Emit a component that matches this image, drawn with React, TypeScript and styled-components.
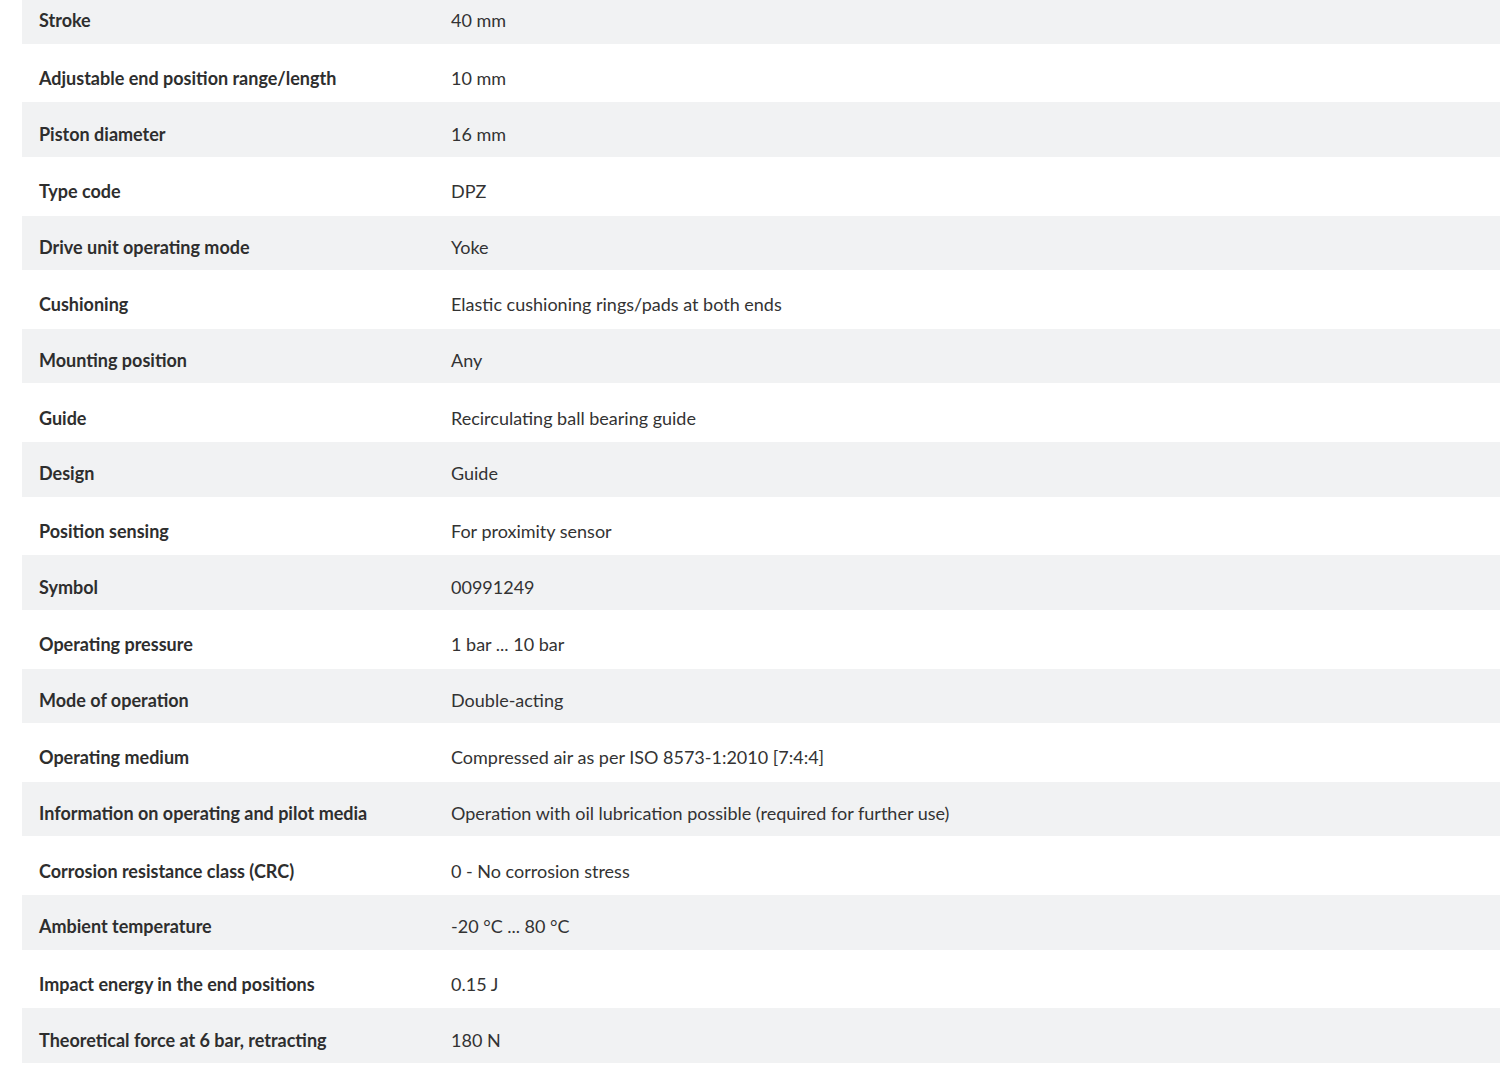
import styled, { createGlobalStyle } from 'styled-components';

const GlobalStyle = createGlobalStyle`
  html, body {
    margin: 0;
    padding: 0;
    background: #fff;
    overflow: hidden;
  }
`;

const specs: [string, string][] = [
  ['Stroke', '40 mm'],
  ['Adjustable end position range/length', '10 mm'],
  ['Piston diameter', '16 mm'],
  ['Type code', 'DPZ'],
  ['Drive unit operating mode', 'Yoke'],
  ['Cushioning', 'Elastic cushioning rings/pads at both ends'],
  ['Mounting position', 'Any'],
  ['Guide', 'Recirculating ball bearing guide'],
  ['Design', 'Guide'],
  ['Position sensing', 'For proximity sensor'],
  ['Symbol', '00991249'],
  ['Operating pressure', '1 bar ... 10 bar'],
  ['Mode of operation', 'Double-acting'],
  ['Operating medium', 'Compressed air as per ISO 8573-1:2010 [7:4:4]'],
  ['Information on operating and pilot media', 'Operation with oil lubrication possible (required for further use)'],
  ['Corrosion resistance class (CRC)', '0 - No corrosion stress'],
  ['Ambient temperature', '-20 °C ... 80 °C'],
  ['Impact energy in the end positions', '0.15 J'],
  ['Theoretical force at 6 bar, retracting', '180 N'],
];

const Page = styled.div`
  padding-left: 22px;
  width: 1500px;
  font-family: Lato, 'Liberation Sans', sans-serif;
  color: #333;
`;

const Table = styled.div`
  margin-top: -11px;
  width: 1500px;
`;

const Row = styled.div<{ $shaded: boolean }>`
  display: grid;
  grid-template-columns: 429px 1fr;
  align-items: center;
  box-sizing: border-box;
  height: ${(p) => (p.$shaded ? '54.5px' : '58.75px')};
  padding-top: ${(p) => (p.$shaded ? '8px' : '10px')};
  background: ${(p) => (p.$shaded ? '#f1f2f3' : '#fff')};
`;

const Label = styled.div`
  padding-left: 17px;
  font-size: 18px;
  font-weight: 700;
  color: #2e2e2e;
`;

const Value = styled.div`
  font-size: 18px;
  color: #333;
`;

const App = () => {
  return (
    <Page>
      <GlobalStyle />
      <Table>
        {specs.map(([label, value], idx) => (
          <Row key={`spec-${idx}`} $shaded={idx % 2 === 0}>
            <Label>{label}</Label>
            <Value>{value}</Value>
          </Row>
        ))}
      </Table>
    </Page>
  );
};

export default App;
